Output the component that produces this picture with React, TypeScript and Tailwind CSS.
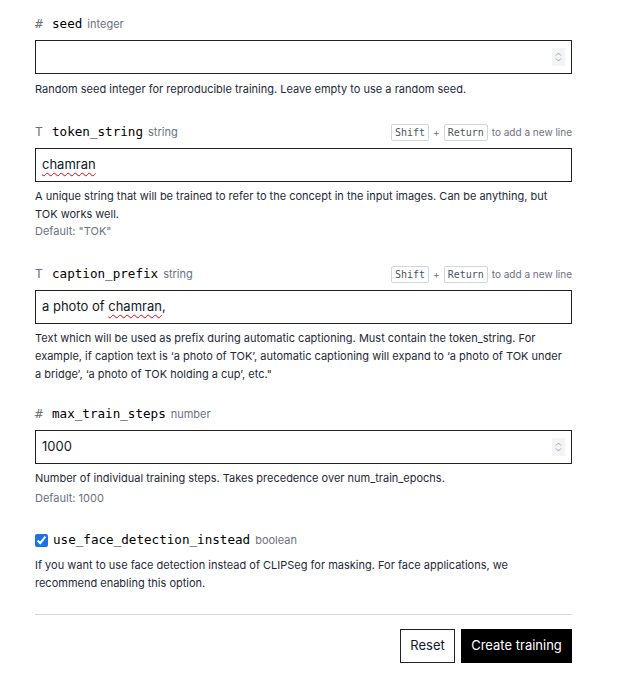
const sans = "font-['Inter','Liberation_Sans',sans-serif]";
const mono = "font-['DejaVu_Sans_Mono','Liberation_Mono',monospace]";

function Kbd({ children }: { children: string }) {
    return (
        <span className={`${mono} rounded-[2px] border border-gray-300 bg-white px-[3px] text-[10px] leading-[15px] text-gray-600`}>
            {children}
        </span>
    );
}

function FieldLabel({
    icon,
    name,
    type,
    multiline,
}: {
    icon: React.ReactNode;
    name: string;
    type: string;
    multiline?: boolean;
}) {
    return (
        <div className="flex h-[20px] items-center justify-between">
            <div className="flex items-baseline">
                <span className="mr-[7px] w-[10px] text-[13px] text-gray-500">{icon}</span>
                <span className={`${mono} mr-[5px] text-[12.6px] text-black`}>{name}</span>
                <span className={`${sans} text-[11px] text-gray-500`}>{type}</span>
            </div>
            {multiline && (
                <div className={`${sans} flex items-center gap-[4px] text-[10px] text-gray-500`}>
                    <Kbd>Shift</Kbd>
                    <span>+</span>
                    <Kbd>Return</Kbd>
                    <span>to add a new line</span>
                </div>
            )}
        </div>
    );
}

function Spinner() {
    return (
        <div className="flex h-[18px] w-[13px] flex-col items-center justify-center bg-gray-100">
            <svg width="7" height="12" viewBox="0 0 7 12" fill="none" stroke="#9ca3af" strokeWidth="1">
                <path d="M1 4.5 3.5 2 6 4.5" />
                <path d="M1 7.5 3.5 10 6 7.5" />
            </svg>
        </div>
    );
}

function InputBox({ children, number }: { children?: React.ReactNode; number?: boolean }) {
    return (
        <div className={`${sans} mt-[6px] flex h-[34px] items-center justify-between border border-[#222] px-[6px] text-[13px] text-gray-900`}>
            <span>{children}</span>
            {number && <Spinner />}
        </div>
    );
}

function Misspelled({ children }: { children: string }) {
    return <span className="underline decoration-red-600 decoration-wavy decoration-1 underline-offset-[3px]">{children}</span>;
}

function Help({ children, className = "" }: { children: React.ReactNode; className?: string }) {
    return <p className={`${sans} text-[11px] leading-[18px] text-gray-800 ${className}`}>{children}</p>;
}

function Default({ children, className = "" }: { children: string; className?: string }) {
    return <p className={`${sans} text-[11px] leading-[17px] text-gray-500 ${className}`}>{children}</p>;
}

const Hash = <span className={mono}>#</span>;
const TIcon = <span className="font-['Liberation_Mono',monospace] text-[13px]">T</span>;

export default function App() {
    return (
        <div className="min-h-screen bg-white">
            <div className="ml-[35px] w-[537px] pt-[14px]">
                <section>
                    <FieldLabel icon={Hash} name="seed" type="integer" />
                    <InputBox number />
                    <Help className="mt-[6px]">
                        Random seed integer for reproducible training. Leave empty to use a random seed.
                    </Help>
                </section>

                <section className="mt-[24px]">
                    <FieldLabel icon={TIcon} name="token_string" type="string" multiline />
                    <InputBox>
                        <Misspelled>chamran</Misspelled>
                    </InputBox>
                    <Help className="mt-[5px]">
                        A unique string that will be trained to refer to the concept in the input images. Can be anything, but
                        TOK works well.
                    </Help>
                    <Default>Default: "TOK"</Default>
                </section>

                <section className="mt-[24px]">
                    <FieldLabel icon={TIcon} name="caption_prefix" type="string" multiline />
                    <InputBox>
                        a photo of <Misspelled>chamran</Misspelled>,
                    </InputBox>
                    <Help className="mt-[5px] pr-[6px] leading-[17px]">
                        Text which will be used as prefix during automatic captioning. Must contain the token_string. For
                        example, if caption text is ‘a photo of TOK’, automatic captioning will expand to ‘a photo of TOK under
                        a bridge’, ‘a photo of TOK holding a cup’, etc."
                    </Help>
                </section>

                <section className="mt-[21px]">
                    <FieldLabel icon={Hash} name="max_train_steps" type="number" />
                    <InputBox number>1000</InputBox>
                    <Help className="mt-[5px]">
                        Number of individual training steps. Takes precedence over num_train_epochs.
                    </Help>
                    <Default className="mt-[3px]">Default: 1000</Default>
                </section>

                <section className="mt-[23px]">
                    <div className="flex h-[20px] items-center">
                        <input type="checkbox" defaultChecked className="m-0 mr-[5px] size-[13px] accent-[#1a73e8]" />
                        <span className={`${mono} mr-[5px] text-[12.6px] text-black`}>use_face_detection_instead</span>
                        <span className={`${sans} text-[11px] text-gray-500`}>boolean</span>
                    </div>
                    <Help className="mt-[6px] leading-[17px]">
                        If you want to use face detection instead of CLIPSeg for masking. For face applications, we
                        recommend enabling this option.
                    </Help>
                </section>

                <div className="mt-[22px] border-t border-gray-300" />

                <div className={`${sans} mt-[14px] flex justify-end gap-[6px] text-[13px]`}>
                    <button className="h-[34px] w-[55px] border border-[#222] bg-white text-gray-900">Reset</button>
                    <button className="h-[34px] w-[111px] bg-black text-white">Create training</button>
                </div>
            </div>
        </div>
    );
}
